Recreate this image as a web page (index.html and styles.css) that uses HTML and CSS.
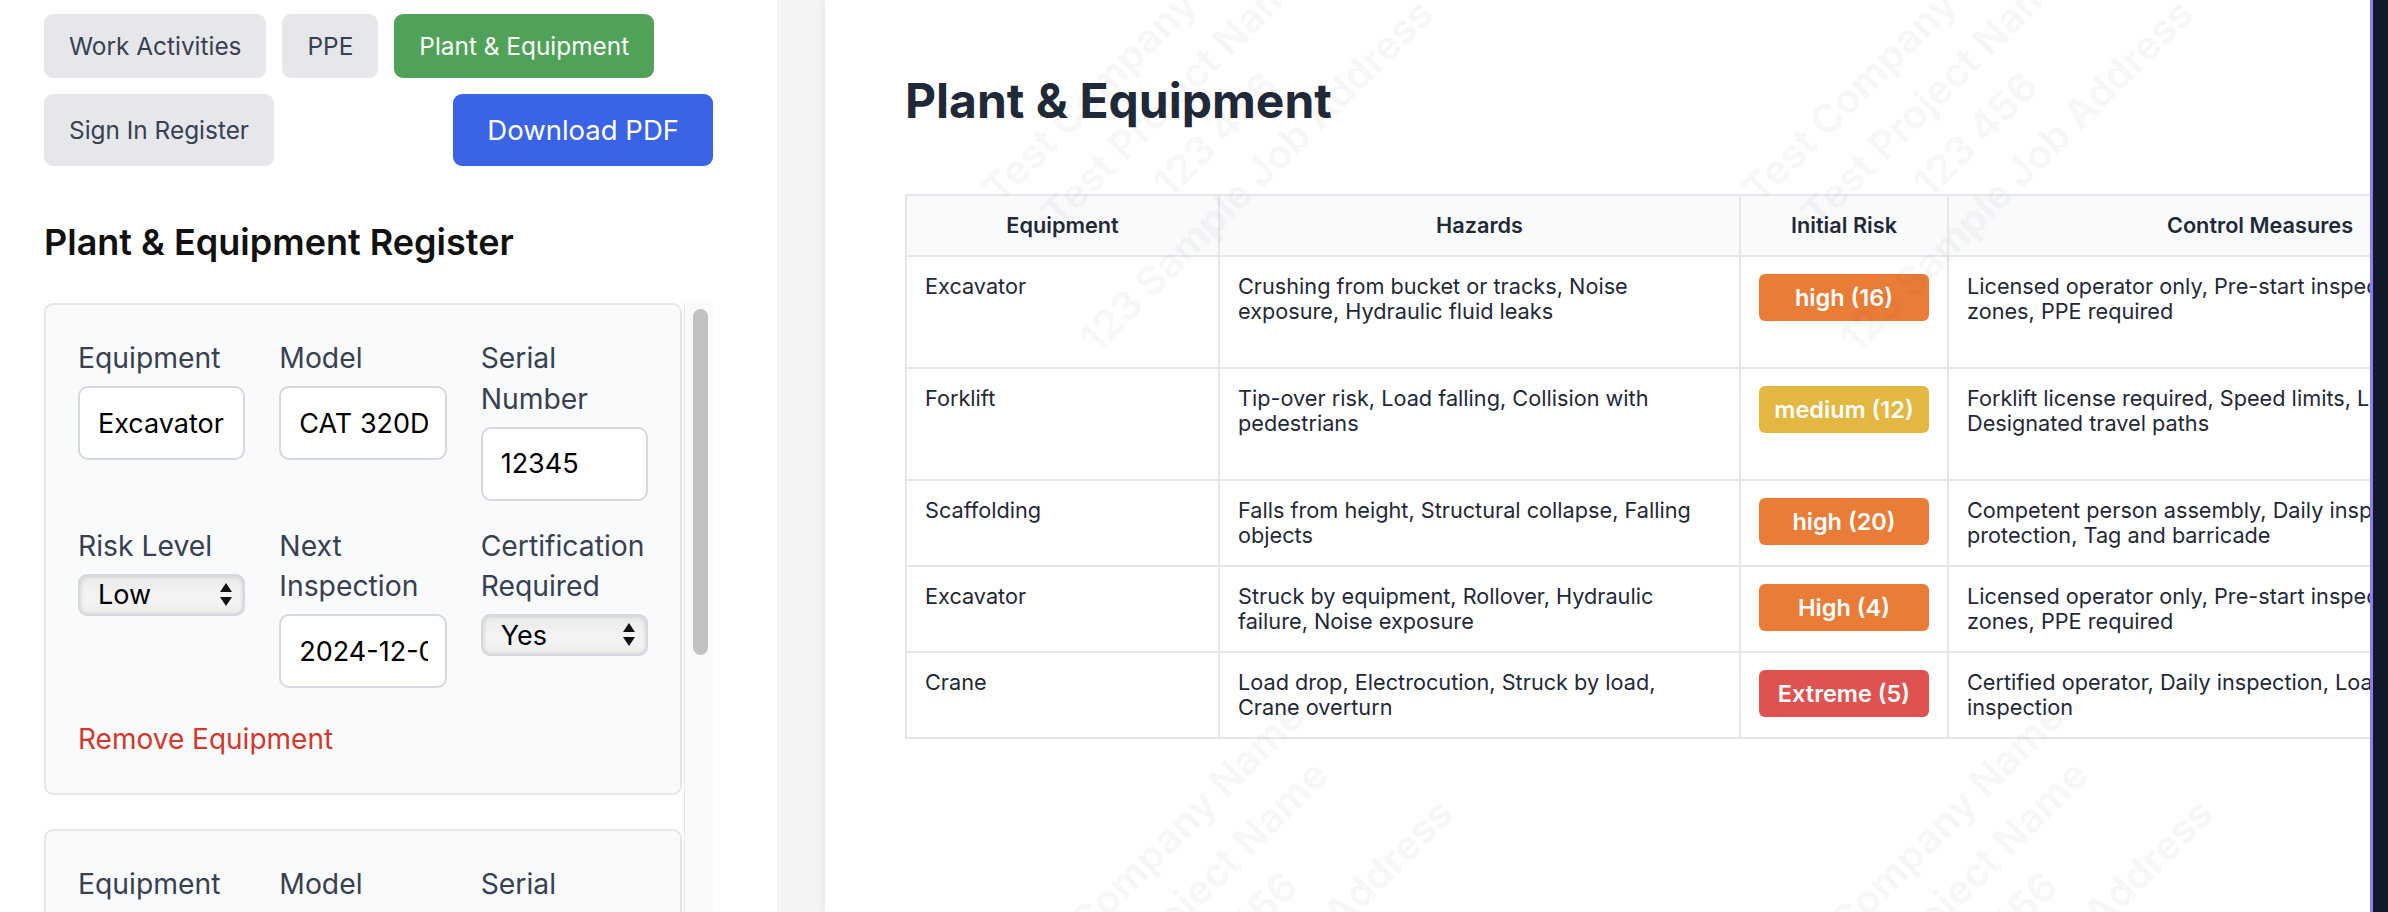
FILE: index.html
```html
<!DOCTYPE html>
<html lang="en">
<head>
<meta charset="utf-8">
<title>Plant &amp; Equipment</title>
<link rel="stylesheet" href="styles.css">
</head>
<body>
<div class="app">
  <aside class="editor">
    <div class="tabs">
      <button class="tab">Work Activities</button>
      <button class="tab">PPE</button>
      <button class="tab tab-active">Plant &amp; Equipment</button>
      <button class="tab">Sign In Register</button>
      <button class="download">Download PDF</button>
    </div>
    <h2 class="section-title">Plant &amp; Equipment Register</h2>
    <div class="card-scroller">
      <div class="card-list">
        <div class="equip-card">
          <div class="field-grid">
            <div class="field"><label>Equipment</label><input class="text-input" type="text" value="Excavator"></div>
            <div class="field"><label>Model</label><input class="text-input" type="text" value="CAT 320D"></div>
            <div class="field"><label>Serial Number</label><input class="text-input" type="text" value="12345"></div>
            <div class="field"><label>Risk Level</label><div class="select-wrap"><select class="select"><option>Low</option><option>Medium</option><option>High</option></select></div></div>
            <div class="field"><label>Next Inspection</label><input class="text-input" type="text" value="2024-12-01"></div>
            <div class="field"><label>Certification Required</label><div class="select-wrap"><select class="select"><option>Yes</option><option>No</option></select></div></div>
          </div>
          <button class="remove">Remove Equipment</button>
        </div>
        <div class="equip-card">
          <div class="field-grid">
            <div class="field"><label>Equipment</label><input class="text-input" type="text" value="Forklift"></div>
            <div class="field"><label>Model</label><input class="text-input" type="text" value="Toyota 8FG"></div>
            <div class="field"><label>Serial Number</label><input class="text-input" type="text" value="67890"></div>
            <div class="field"><label>Risk Level</label><div class="select-wrap"><select class="select"><option>Medium</option></select></div></div>
            <div class="field"><label>Next Inspection</label><input class="text-input" type="text" value="2024-11-15"></div>
            <div class="field"><label>Certification Required</label><div class="select-wrap"><select class="select"><option>Yes</option></select></div></div>
          </div>
          <button class="remove">Remove Equipment</button>
        </div>
      </div>
      <div class="scrollbar"><div class="scroll-thumb"></div></div>
    </div>
  </aside>

  <main class="preview">
    <div class="page">
      <h1 class="page-title">Plant &amp; Equipment</h1>
      <table class="register">
        <colgroup>
          <col class="c-equip"><col class="c-hazard"><col class="c-risk"><col class="c-control">
        </colgroup>
        <thead>
          <tr><th>Equipment</th><th>Hazards</th><th>Initial Risk</th><th>Control Measures</th></tr>
        </thead>
        <tbody>
          <tr class="tall">
            <td>Excavator</td>
            <td class="hazard">Crushing from bucket or tracks, Noise exposure, Hydraulic fluid leaks</td>
            <td><span class="badge badge-high">high (16)</span></td>
            <td>Licensed operator only, Pre-start inspection, Exclusion zones, PPE required</td>
          </tr>
          <tr class="tall">
            <td>Forklift</td>
            <td class="hazard">Tip-over risk, Load falling, Collision with pedestrians</td>
            <td><span class="badge badge-medium">medium (12)</span></td>
            <td>Forklift license required, Speed limits, Load limits, Designated travel paths</td>
          </tr>
          <tr>
            <td>Scaffolding</td>
            <td class="hazard">Falls from height, Structural collapse, Falling objects</td>
            <td><span class="badge badge-high">high (20)</span></td>
            <td>Competent person assembly, Daily inspection, Edge protection, Tag and barricade</td>
          </tr>
          <tr>
            <td>Excavator</td>
            <td class="hazard">Struck by equipment, Rollover, Hydraulic failure, Noise exposure</td>
            <td><span class="badge badge-high">High (4)</span></td>
            <td>Licensed operator only, Pre-start inspection, Exclusion zones, PPE required</td>
          </tr>
          <tr>
            <td>Crane</td>
            <td class="hazard">Load drop, Electrocution, Struck by load, Crane overturn</td>
            <td><span class="badge badge-extreme">Extreme (5)</span></td>
            <td>Certified operator, Daily inspection, Load charts, Rigging inspection</td>
          </tr>
        </tbody>
      </table>
      <div class="watermarks" aria-hidden="true">
        <div class="wm wm-1">Test Company Name<br>Test Project Name<br>123 456<br>123 Sample Job Address</div>
        <div class="wm wm-2">Test Company Name<br>Test Project Name<br>123 456<br>123 Sample Job Address</div>
        <div class="wm wm-3">Test Company Name<br>Test Project Name<br>123 456<br>123 Sample Job Address</div>
        <div class="wm wm-4">Test Company Name<br>Test Project Name<br>123 456<br>123 Sample Job Address</div>
      </div>
    </div>
  </main>

  <div class="side-strip"></div>
</div>
</body>
</html>
```

FILE: styles.css
```css
* { box-sizing: border-box; }

html, body {
  margin: 0;
  padding: 0;
  background: #ffffff;
  font-family: Inter, "Noto Sans", "Liberation Sans", sans-serif;
}

.app {
  display: flex;
  width: 2388px;
  height: 912px;
  overflow: hidden;
}

/* ---------- Left editor panel ---------- */
.editor {
  flex: none;
  width: 777px;
  height: 912px;
  padding: 14px 64px 0 44px;
  display: flex;
  flex-direction: column;
  background: #ffffff;
}

.tabs {
  display: flex;
  flex-wrap: wrap;
  gap: 16px;
}

.tab {
  font-family: Inter, "Noto Sans", sans-serif;
  font-size: 24.4px;
  line-height: 36px;
  padding: 14px 25px;
  border: 0;
  border-radius: 9px;
  background: #e5e7eb;
  color: #374151;
}

.tab-active {
  background: #4fa257;
  color: #ffffff;
}

.download {
  margin-left: auto;
  font-family: Inter, "Noto Sans", sans-serif;
  font-size: 27.5px;
  line-height: 42px;
  padding: 15px 34px;
  border: 0;
  border-radius: 9px;
  background: #3a63e5;
  color: #ffffff;
}

.section-title {
  margin: 49px 0 34px;
  font-size: 36px;
  line-height: 54px;
  font-weight: 600;
  color: #111111;
}

.card-scroller {
  flex: 1;
  min-height: 0;
  display: flex;
  gap: 2px;
}

.card-list {
  flex: 1;
  min-width: 0;
  overflow: hidden;
}

.scrollbar {
  flex: none;
  width: 29px;
  padding: 6px 5px 0 8px;
  background: #fafafa;
  border-left: 1px solid #e6e6e6;
}

.scroll-thumb {
  height: 346px;
  border-radius: 8px;
  background: #c1c1c1;
}

.equip-card {
  margin-bottom: 34px;
  padding: 33px 32px 33px 32px;
  background: #f9fafb;
  border: 2px solid #e5e7eb;
  border-radius: 9px;
}

.field-grid {
  display: grid;
  grid-template-columns: repeat(3, 1fr);
  column-gap: 34px;
  row-gap: 25px;
}

.field label {
  display: block;
  margin-bottom: 7.5px;
  font-size: 28.3px;
  line-height: 40.5px;
  color: #374151;
  white-space: normal;
}

.text-input {
  display: block;
  width: 100%;
  height: 74px;
  padding: 0 17px 0 18px;
  font-family: Inter, "Noto Sans", sans-serif;
  font-size: 27px;
  color: #000000;
  background: #ffffff;
  border: 2px solid #d5d8dd;
  border-radius: 10px;
  outline: none;
}

.select-wrap {
  position: relative;
  margin-top: 5px;
}

.select {
  display: block;
  width: 100%;
  height: 42px;
  padding: 0 40px 0 18px;
  -webkit-appearance: none;
  appearance: none;
  font-family: Inter, "Noto Sans", sans-serif;
  font-size: 27px;
  color: #000000;
  border: 2px solid #d5d8dd;
  border-radius: 9px;
  background: linear-gradient(to bottom, #e9e9e9 0%, #f4f4f4 55%, #eeeeee 100%);
  box-shadow: inset 0 0 4px rgba(0, 0, 0, 0.16);
}

.select-wrap::before,
.select-wrap::after {
  content: "";
  position: absolute;
  right: 13px;
  width: 0;
  height: 0;
  border-left: 6px solid transparent;
  border-right: 6px solid transparent;
  pointer-events: none;
}

.select-wrap::before {
  top: 9px;
  border-bottom: 9px solid #111111;
}

.select-wrap::after {
  top: 23px;
  border-top: 9px solid #111111;
}

.remove {
  display: block;
  margin-top: 31px;
  padding: 0;
  font-family: Inter, "Noto Sans", sans-serif;
  font-size: 28px;
  line-height: 40.5px;
  color: #d4372c;
  background: none;
  border: 0;
}

/* ---------- Preview ---------- */
.preview {
  flex: 1;
  min-width: 0;
  height: 912px;
  padding-left: 48px;
  background: #f3f4f6;
  overflow: hidden;
}

.page {
  position: relative;
  width: 1900px;
  height: 912px;
  padding: 72px 80px;
  background: #ffffff;
  box-shadow: 0 0 9px rgba(0, 0, 0, 0.09);
  overflow: hidden;
}

.page-title {
  margin: 0 0 64px;
  font-size: 48px;
  line-height: 58px;
  font-weight: 700;
  color: #1f2937;
}

.register {
  border-collapse: collapse;
  table-layout: fixed;
  width: 1666px;
  font-size: 21.7px;
  line-height: 25px;
  color: #1f2937;
}

.c-equip { width: 313px; }
.c-hazard { width: 521px; }
.c-risk { width: 208px; }
.c-control { width: 624px; }

.register th,
.register td {
  border: 2px solid #e5e7eb;
  padding: 17px 18px;
  vertical-align: top;
  text-align: left;
}

.register td.hazard {
  padding-right: 22px;
}

.register th {
  background: #f9fafb;
  font-weight: 600;
  text-align: center;
}

.register tr.tall {
  height: 112px;
}

.badge {
  display: block;
  padding: 11px 0;
  border-radius: 6px;
  font-size: 23.5px;
  font-weight: 600;
  line-height: 25px;
  text-align: center;
  color: #ffffff;
}

.badge-high { background: #e97d38; }
.badge-medium { background: #e3b741; }
.badge-extreme { background: #e05250; }

/* watermark overlay */
.watermarks {
  position: absolute;
  inset: 0;
  pointer-events: none;
}

.wm {
  position: absolute;
  transform: translate(-50%, -50%) rotate(-45deg);
  font-size: 40px;
  line-height: 58px;
  font-weight: 700;
  text-align: center;
  white-space: nowrap;
  color: rgba(17, 24, 39, 0.04);
}

.wm-1 { left: 370px; top: 114px; }
.wm-2 { left: 1130px; top: 114px; }
.wm-3 { left: 390px; top: 914px; }
.wm-4 { left: 1150px; top: 914px; }

/* ---------- right edge strip ---------- */
.side-strip {
  flex: none;
  width: 18px;
  height: 912px;
  background: #111827;
  border-left: 3px solid #8b7cf6;
}
```
